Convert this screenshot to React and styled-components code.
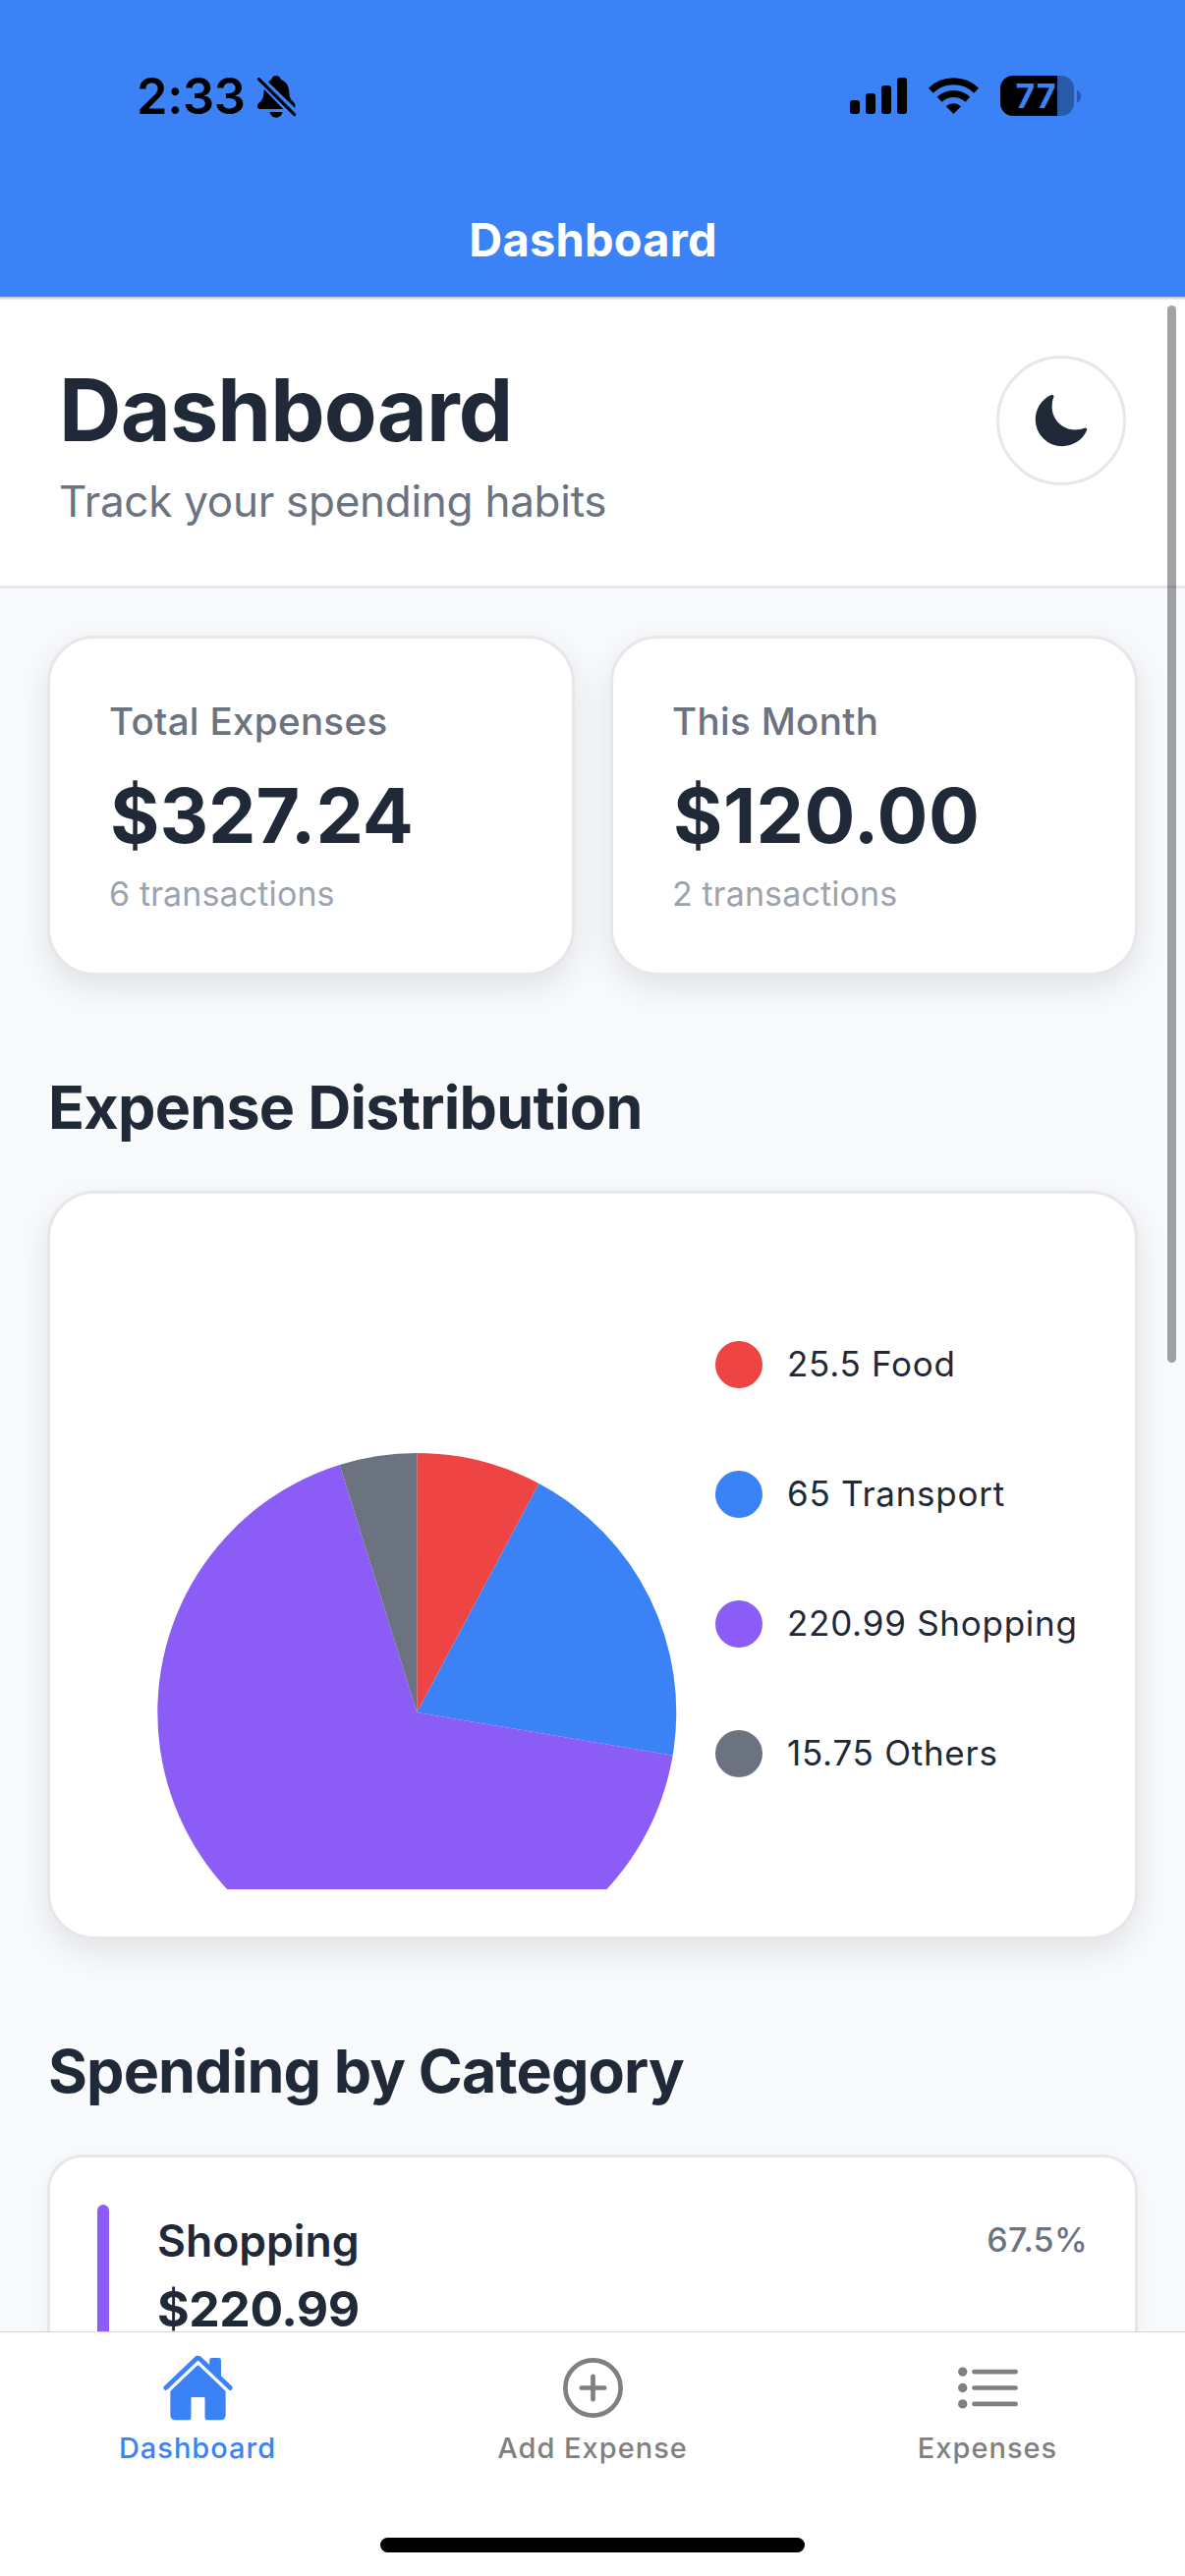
import React from "react";
import styled, { createGlobalStyle } from "styled-components";
import { IoMoon, IoHome, IoAddCircleOutline, IoListOutline } from "react-icons/io5";

const colors = {
  primary: "#3b82f6",
  text: "#1f2937",
  muted: "#6b7280",
  faint: "#9ca3af",
  border: "#e5e7eb",
  background: "#f9fafc",
  surface: "#ffffff",
};

const GlobalStyle = createGlobalStyle`
  *, *::before, *::after { box-sizing: border-box; }
  body { margin: 0; background: ${colors.surface}; }
  h1, h2, p { margin: 0; }
`;

const Screen = styled.div`
  position: relative;
  display: flex;
  flex-direction: column;
  width: 1206px;
  height: 2622px;
  overflow: hidden;
  background: ${colors.background};
  color: ${colors.text};
  font-family: Inter, "Liberation Sans", sans-serif;
  white-space: nowrap;
`;

const NavBar = styled.header`
  position: relative;
  z-index: 1;
  flex: none;
  height: 302px;
  background: ${colors.primary};
  box-shadow: 0 1px 0 #c6c6c8, 0 2px 0 #dcdcde, 0 3px 0 #e9e9eb;
`;

const StatusBar = styled.div`
  display: flex;
  align-items: center;
  justify-content: space-between;
  height: 195px;
  padding: 0 106px 0 139px;
`;

const StatusGroup = styled.div`
  display: flex;
  align-items: center;
  gap: ${(p) => p.$gap}px;
`;

const Clock = styled.span`
  font-size: 50.5px;
  font-weight: 600;
  line-height: 60px;
  letter-spacing: -0.3px;
  color: #000;
`;

const Battery = styled.div`
  display: flex;
  align-items: center;
  gap: 3px;
`;

const BatteryBody = styled.div`
  width: 75px;
  height: 41px;
  padding-left: 15.5px;
  border-radius: 13px;
  background: linear-gradient(to right, #000 58px, rgba(0, 0, 0, 0.31) 58px);
  color: ${colors.primary};
  font-size: 34px;
  font-weight: 700;
  line-height: 41px;
  letter-spacing: 0.7px;
`;

const BatteryCap = styled.div`
  width: 4px;
  height: 12px;
  border-radius: 0 4px 4px 0 / 0 6px 6px 0;
  background: rgba(0, 0, 0, 0.31);
`;

const NavTitle = styled.div`
  margin-top: 19px;
  padding-left: 1px;
  text-align: center;
  color: #fff;
  font-size: 47px;
  font-weight: 700;
  line-height: 60px;
  letter-spacing: 0.2px;
`;

const Content = styled.main`
  flex: 1;
  min-height: 0;
  overflow: hidden;
`;

const PageHeader = styled.section`
  display: flex;
  align-items: flex-start;
  justify-content: space-between;
  height: 297px;
  padding: 60px;
  border-bottom: 3px solid ${colors.border};
  background: ${colors.surface};
`;

const PageTitle = styled.h1`
  font-size: 88px;
  font-weight: 700;
  line-height: 110px;
  letter-spacing: -0.88px;
`;

const PageSubtitle = styled.p`
  margin-top: 8px;
  color: ${colors.muted};
  font-size: 44px;
  line-height: 60px;
  letter-spacing: -0.27px;
`;

const ThemeButton = styled.button`
  display: flex;
  align-items: center;
  justify-content: center;
  width: 132px;
  height: 132px;
  padding: 0;
  border: 3px solid ${colors.border};
  border-radius: 50%;
  background: ${colors.surface};
  color: ${colors.text};
`;

const Body = styled.div`
  padding: 48px;
`;

const StatGrid = styled.div`
  display: grid;
  grid-template-columns: 1fr 1fr;
  gap: 36px;
`;

const Card = styled.div`
  border: 3px solid ${colors.border};
  border-radius: 48px;
  background: ${colors.surface};
  box-shadow: 0 12px 36px rgba(0, 0, 0, 0.1);
`;

const StatCard = styled(Card)`
  height: 346px;
  padding: 60px;
`;

const StatLabel = styled.div`
  color: ${colors.muted};
  font-size: 38.5px;
  font-weight: 500;
  line-height: 48px;
  letter-spacing: 0.33px;
`;

const StatValue = styled.div`
  margin-top: 26px;
  padding-left: 1px;
  font-size: 77px;
  font-weight: 700;
  line-height: 92px;
  letter-spacing: ${(p) => p.$tracking}px;
`;

const StatNote = styled.div`
  margin-top: 12px;
  color: ${colors.faint};
  font-size: 34px;
  line-height: 43px;
  letter-spacing: 0.12px;
`;

const SectionTitle = styled.h2`
  margin: 98px 0 49px;
  padding-left: 1px;
  font-size: 61px;
  font-weight: 700;
  line-height: 72px;
  letter-spacing: ${(p) => p.$tracking}px;
`;

const ChartCard = styled(Card)`
  display: flex;
  height: 762px;
  padding: 48px;
`;

const Pie = styled.svg`
  flex: none;
  display: block;
  overflow: hidden;
`;

const Legend = styled.ul`
  display: flex;
  flex-direction: column;
  gap: 84px;
  margin: 0;
  padding: 102px 0 0;
  list-style: none;
`;

const LegendItem = styled.li`
  display: flex;
  align-items: center;
  gap: 25px;
  height: 48px;
  font-size: 35px;
  line-height: 46px;
  letter-spacing: 0.74px;
`;

const LegendText = styled.span`
  padding-bottom: 2px;
`;

const Dot = styled.span`
  width: 48px;
  height: 48px;
  border-radius: 50%;
  background: ${(p) => p.$color};
`;

const CategoryCard = styled(Card)`
  display: flex;
  gap: 49px;
  height: 300px;
  padding: 48px;
  border-radius: 36px;
  box-shadow: 0 6px 24px rgba(0, 0, 0, 0.05);
`;

const CategoryBar = styled.div`
  flex: none;
  width: 12px;
  border-radius: 6px;
  background: ${(p) => p.$color};
`;

const CategoryInfo = styled.div`
  flex: 1;
  padding-top: 7px;
`;

const CategoryName = styled.div`
  font-size: 44.5px;
  font-weight: 600;
  line-height: 60px;
`;

const CategoryAmount = styled.div`
  margin-top: 6px;
  font-size: 50px;
  font-weight: 700;
  line-height: 66px;
  letter-spacing: -0.45px;
`;

const CategoryShare = styled.div`
  padding-top: 15px;
  color: ${colors.muted};
  font-size: 34px;
  font-weight: 500;
  line-height: 42px;
  letter-spacing: 0.3px;
`;

const ScrollThumb = styled.div`
  position: absolute;
  top: 311px;
  right: 9px;
  width: 9px;
  height: 1076px;
  border-radius: 5px;
  background: rgba(0, 0, 0, 0.36);
`;

const TabBar = styled.nav`
  flex: none;
  display: flex;
  flex-direction: column;
  align-items: center;
  justify-content: space-between;
  height: 249px;
  padding: 19px 0 24px;
  border-top: 1px solid #d8d8d8;
  background: ${colors.surface};
`;

const Tabs = styled.div`
  display: grid;
  grid-template-columns: repeat(3, 1fr);
  width: 100%;
`;

const Tab = styled.div`
  display: flex;
  flex-direction: column;
  align-items: center;
  color: ${(p) => (p.$active ? colors.primary : "#808080")};
`;

const TabLabel = styled.span`
  margin-top: 6px;
  font-size: 29px;
  font-weight: 500;
  line-height: 36px;
  letter-spacing: 1px;
`;

const HomeIndicator = styled.div`
  width: 432px;
  height: 15px;
  border-radius: 8px;
  background: #000;
`;

const BellSlash = () => (
  <svg width="42" height="46" viewBox="0 0 126 138">
    <path
      fill="#000"
      d="M40 26C42 22 45 20 48 18C51 10 56 6 63 6C70 6 75 10 78 18C95 25 102 38 103 58C104 74 108 80 116 86C121 90 122 96 121 105Z"
    />
    <path
      fill="#000"
      d="M26 47L85 108H14C5 108 4 97 9 91C20 82 24 74 25 62Z"
    />
    <path fill="#000" d="M43 117H83C80 128 73 134 63 134C53 134 46 128 43 117Z" />
    <path d="M10 16L119 125" stroke="#000" strokeWidth="9" strokeLinecap="round" />
  </svg>
);

const Signal = () => (
  <svg width="58" height="37" viewBox="0 0 58 37">
    <rect x="0" y="23" width="10" height="14" rx="3" />
    <rect x="16" y="16" width="10" height="21" rx="3" />
    <rect x="32" y="8" width="10" height="29" rx="3" />
    <rect x="48" y="0" width="10" height="37" rx="3" />
  </svg>
);

const Wifi = () => (
  <svg width="51" height="37" viewBox="0 0 152 111" fill="none" stroke="#000" strokeWidth="21">
    <path d="M6.5 39.5A100 100 0 0 1 145.5 39.5" />
    <path d="M33 67A62 62 0 0 1 119 67" />
    <path d="M76 111L53 88A34 34 0 0 1 99 88Z" fill="#000" stroke="none" />
  </svg>
);

const distribution = [
  { name: "Food", amount: 25.5, color: "#ef4444" },
  { name: "Transport", amount: 65, color: "#3b82f6" },
  { name: "Shopping", amount: 220.99, color: "#8b5cf6" },
  { name: "Others", amount: 15.75, color: "#6b7280" },
];

const PieChart = ({ data, cx, cy, r }) => {
  const total = data.reduce((sum, d) => sum + d.amount, 0);
  const point = (share) => {
    const a = share * 2 * Math.PI;
    return `${cx + r * Math.sin(a)} ${cy - r * Math.cos(a)}`;
  };
  let start = 0;
  return (
    <Pie width="629" height="660" viewBox="0 0 629 660">
      {data.map((d) => {
        const end = start + d.amount / total;
        const large = end - start > 0.5 ? 1 : 0;
        const path = `M${cx} ${cy}L${point(start)}A${r} ${r} 0 ${large} 1 ${point(end)}Z`;
        start = end;
        return <path key={d.name} d={path} fill={d.color} />;
      })}
    </Pie>
  );
};

const tabs = [
  { label: "Dashboard", Icon: IoHome, active: true },
  { label: "Add Expense", Icon: IoAddCircleOutline },
  { label: "Expenses", Icon: IoListOutline },
];

export default function App() {
  return (
    <>
      <GlobalStyle />
      <Screen>
        <NavBar>
          <StatusBar>
            <StatusGroup $gap={10}>
              <Clock>2:33</Clock>
              <BellSlash />
            </StatusGroup>
            <StatusGroup $gap={22}>
              <Signal />
              <Wifi />
              <Battery>
                <BatteryBody>77</BatteryBody>
                <BatteryCap />
              </Battery>
            </StatusGroup>
          </StatusBar>
          <NavTitle>Dashboard</NavTitle>
        </NavBar>

        <Content>
          <PageHeader>
            <div>
              <PageTitle>Dashboard</PageTitle>
              <PageSubtitle>Track your spending habits</PageSubtitle>
            </div>
            <ThemeButton aria-label="Toggle dark mode">
              <IoMoon size={60} />
            </ThemeButton>
          </PageHeader>

          <Body>
            <StatGrid>
              <StatCard>
                <StatLabel>Total Expenses</StatLabel>
                <StatValue $tracking={0}>$327.24</StatValue>
                <StatNote>6 transactions</StatNote>
              </StatCard>
              <StatCard>
                <StatLabel>This Month</StatLabel>
                <StatValue $tracking={0.47}>$120.00</StatValue>
                <StatNote>2 transactions</StatNote>
              </StatCard>
            </StatGrid>

            <SectionTitle $tracking={-0.75}>Expense Distribution</SectionTitle>
            <ChartCard>
              <PieChart data={distribution} cx={325.3} cy={480} r={264} />
              <Legend>
                {distribution.map((d) => (
                  <LegendItem key={d.name}>
                    <Dot $color={d.color} />
                    <LegendText>{`${d.amount} ${d.name}`}</LegendText>
                  </LegendItem>
                ))}
              </Legend>
            </ChartCard>

            <SectionTitle $tracking={-0.87}>Spending by Category</SectionTitle>
            <CategoryCard>
              <CategoryBar $color="#8b5cf6" />
              <CategoryInfo>
                <CategoryName>Shopping</CategoryName>
                <CategoryAmount>$220.99</CategoryAmount>
              </CategoryInfo>
              <CategoryShare>67.5%</CategoryShare>
            </CategoryCard>
          </Body>
        </Content>

        <ScrollThumb />

        <TabBar>
          <Tabs>
            {tabs.map(({ label, Icon, active }) => (
              <Tab key={label} $active={active}>
                <Icon size={75} />
                <TabLabel>{label}</TabLabel>
              </Tab>
            ))}
          </Tabs>
          <HomeIndicator />
        </TabBar>
      </Screen>
    </>
  );
}
